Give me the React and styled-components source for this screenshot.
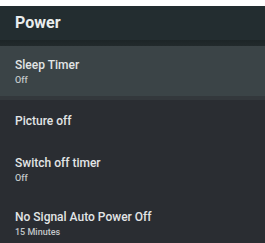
import React from "react";
import styled, { createGlobalStyle } from "styled-components";

const GlobalStyle = createGlobalStyle`
  html, body {
    margin: 0;
    padding: 0;
    background: #ffffff;
  }
  body {
    font-family: Roboto, "Liberation Sans", sans-serif;
  }
`;

// ROWS OF THE POWER MENU
const ITEMS = [
  { title: "Sleep Timer", value: "Off", active: true },
  { title: "Picture off" },
  { title: "Switch off timer", value: "Off" },
  { title: "No Signal Auto Power Off", value: "15 Minutes" },
];

const App = () => {
  return (
    <>
      <GlobalStyle />
      <Page>
        <Panel>
          <Header>
            <Title>Power</Title>
          </Header>
          <Shadow />
          <List>
            {ITEMS.map((item) => (
              <Row key={item.title} $active={item.active} $single={!item.value}>
                <RowTitle>{item.title}</RowTitle>
                {item.value && <RowValue>{item.value}</RowValue>}
              </Row>
            ))}
          </List>
        </Panel>
      </Page>
    </>
  );
};

const Page = styled.div`
  width: 265px;
  height: 243px;
  padding-top: 6px;
  box-sizing: border-box;
  background: #ffffff;
`;

const Panel = styled.div`
  width: 265px;
  height: 237px;
  background: #2a2d32;
  display: flex;
  flex-direction: column;
  overflow: hidden;
`;

const Header = styled.div`
  height: 34px;
  flex-shrink: 0;
  background: #232d30;
  display: flex;
  align-items: center;
  padding-left: 15px;
`;

const Title = styled.div`
  color: #e9eded;
  font-size: 16px;
  font-weight: 700;
  margin-top: -2px;
`;

const Shadow = styled.div`
  height: 6px;
  flex-shrink: 0;
  background: linear-gradient(#1d2527, #222a2c);
`;

const List = styled.div`
  display: flex;
  flex-direction: column;
`;

const Row = styled.div`
  height: ${(p) => (p.$active ? "50px" : p.$single ? "42px" : "54px")};
  flex-shrink: 0;
  display: flex;
  flex-direction: column;
  justify-content: center;
  padding-left: 15px;
  gap: 3px;
  background: ${(p) => (p.$active ? "#3b4447" : "transparent")};
  border-bottom: ${(p) => (p.$active ? "4px solid #33383c" : "none")};
`;

const RowTitle = styled.div`
  color: #e2e5e6;
  font-size: 12px;
  font-weight: 500;
`;

const RowValue = styled.div`
  color: #c3c8ca;
  font-size: 9px;
  font-weight: 500;
`;

export default App;
